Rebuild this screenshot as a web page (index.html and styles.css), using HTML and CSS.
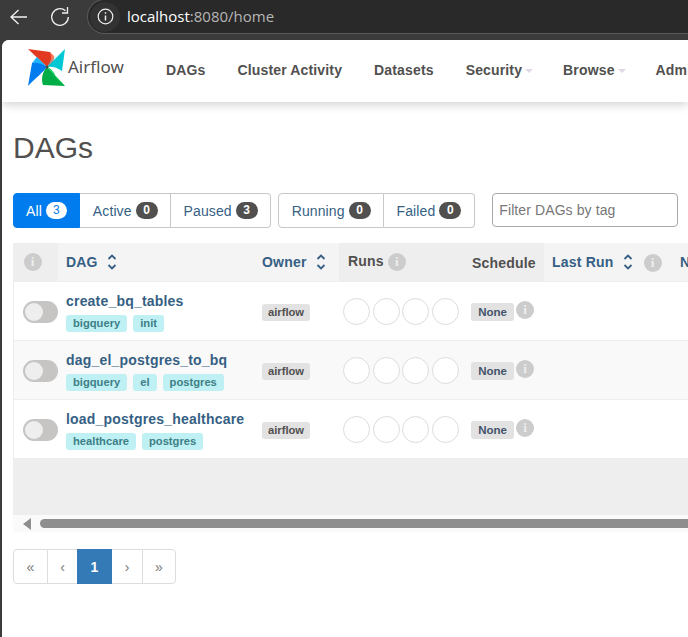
FILE: index.html
```html
<!DOCTYPE html>
<html lang="en">
<head>
<meta charset="utf-8">
<title>DAGs - Airflow</title>
<link rel="stylesheet" href="styles.css">
</head>
<body>
<header class="chrome">
  <div class="chrome-nav">
    <svg class="ic-back" width="20" height="18" viewBox="0 0 20 18"><path d="M18 9H2M9.500 2 2 9l7.500 7" fill="none" stroke="#f2f2f2" stroke-width="1.300"/></svg>
    <svg class="ic-reload" width="20" height="20" viewBox="0 0 20 20"><path d="M15.500 3.800A8.300 8.300 0 1 0 18.300 10" fill="none" stroke="#f2f2f2" stroke-width="1.300"/><path d="M12 6h5.500V0" fill="none" stroke="#f2f2f2" stroke-width="1.300"/></svg>
  </div>
  <div class="address">
    <span class="site-info"><svg width="17" height="17" viewBox="0 0 17 17"><circle cx="8.500" cy="8.500" r="7.300" fill="none" stroke="#eee" stroke-width="1.200"/><path d="M8.500 7.500v5M8.500 4.300v1.500" stroke="#eee" stroke-width="1.500"/></svg></span>
    <span class="url"><b>localhost</b>:8080/home</span>
  </div>
</header>
<main class="page">
  <nav class="navbar">
    <a class="brand">
      <svg width="38" height="38" viewBox="0 0 38 38">
        <path d="M0 0 22 3C25 8 24 14 19 18Z" fill="#e43921"/>
        <path d="M22 3 26 7C27 11 24 15 19 18 23 14 24 8 22 3Z" fill="#ff7557"/>
        <path d="M37 0 34 22C29 18 23 17 19 18Z" fill="#00c7d4"/>
        <path d="M37 0 26 9C23 12 20 15 19 18 22 13 28 7 37 0Z" fill="#11e1ee"/>
        <path d="M37 37 15 36C13 31 14 23 19 18Z" fill="#00ad46"/>
        <path d="M37 37 19 18C24 20 27 24 28 29Z" fill="#04d659"/>
        <path d="M0 37 4 14C8 12 14 13 19 18 15 23 8 29 0 37Z" fill="#017cee"/>
        <path d="M9 8 19 18C15 15 9 13 4 14Z" fill="#1bb5ff"/>
        <circle cx="19" cy="18" r="1.500" fill="#4a4a4a"/>
      </svg>
      <span class="brand-name">Airflow</span>
    </a>
    <ul class="menu">
      <li>DAGs</li>
      <li>Cluster Activity</li>
      <li>Datasets</li>
      <li class="drop">Security</li>
      <li class="drop">Browse</li>
      <li class="drop">Admin</li>
    </ul>
  </nav>
  <section class="content">
    <h1>DAGs</h1>
    <div class="filters">
      <div class="btn-group">
        <a class="filter on">All <span class="count">3</span></a>
        <a class="filter">Active <span class="count">0</span></a>
        <a class="filter">Paused <span class="count">3</span></a>
      </div>
      <div class="btn-group">
        <a class="filter">Running <span class="count">0</span></a>
        <a class="filter">Failed <span class="count">0</span></a>
      </div>
      <input class="tag-filter" type="text" placeholder="Filter DAGs by tag">
    </div>
    <div class="table-wrap">
      <table class="dags">
        <colgroup>
          <col class="c-pause"><col class="c-dag"><col class="c-owner"><col class="c-runs"><col class="c-sched"><col class="c-last"><col class="c-next">
        </colgroup>
        <thead>
          <tr>
            <th class="plain"><span class="info">i</span></th>
            <th class="sortable">DAG <svg class="sort" width="10" height="18" viewBox="0 0 10 18"><path d="M1.500 6 5 2.500 8.500 6M1.500 12 5 15.500 8.500 12" fill="none" stroke="#365f84" stroke-width="1.800"/></svg></th>
            <th class="sortable">Owner <svg class="sort" width="10" height="18" viewBox="0 0 10 18"><path d="M1.500 6 5 2.500 8.500 6M1.500 12 5 15.500 8.500 12" fill="none" stroke="#365f84" stroke-width="1.800"/></svg></th>
            <th class="plain runs-head">Runs <span class="info">i</span></th>
            <th class="plain sched-head">Schedule</th>
            <th class="sortable">Last Run <svg class="sort" width="10" height="18" viewBox="0 0 10 18"><path d="M1.500 6 5 2.500 8.500 6M1.500 12 5 15.500 8.500 12" fill="none" stroke="#365f84" stroke-width="1.800"/></svg><span class="info last-info">i</span></th>
            <th class="sortable">Next Run</th>
          </tr>
        </thead>
        <tbody>
          <tr>
            <td class="toggle-cell"><span class="toggle"></span></td>
            <td><a class="dag-name">create_bq_tables</a><div class="tags"><span class="tag">bigquery</span><span class="tag">init</span></div></td>
            <td><span class="owner">airflow</span></td>
            <td><div class="runs"><i></i><i></i><i></i><i></i></div></td>
            <td><div class="sched"><span class="none">None</span><span class="info sched-info">i</span></div></td>
            <td></td><td></td>
          </tr>
          <tr class="alt">
            <td class="toggle-cell"><span class="toggle"></span></td>
            <td><a class="dag-name">dag_el_postgres_to_bq</a><div class="tags"><span class="tag">bigquery</span><span class="tag">el</span><span class="tag">postgres</span></div></td>
            <td><span class="owner">airflow</span></td>
            <td><div class="runs"><i></i><i></i><i></i><i></i></div></td>
            <td><div class="sched"><span class="none">None</span><span class="info sched-info">i</span></div></td>
            <td></td><td></td>
          </tr>
          <tr>
            <td class="toggle-cell"><span class="toggle"></span></td>
            <td><a class="dag-name">load_postgres_healthcare</a><div class="tags"><span class="tag">healthcare</span><span class="tag">postgres</span></div></td>
            <td><span class="owner">airflow</span></td>
            <td><div class="runs"><i></i><i></i><i></i><i></i></div></td>
            <td><div class="sched"><span class="none">None</span><span class="info sched-info">i</span></div></td>
            <td></td><td></td>
          </tr>
        </tbody>
      </table>
      <div class="table-empty"></div>
      <div class="scrollbar">
        <span class="scroll-arrow"></span>
        <span class="scroll-thumb"></span>
      </div>
    </div>
    <ul class="pager">
      <li>«</li><li>‹</li><li class="current">1</li><li>›</li><li>»</li>
    </ul>
  </section>
</main>
</body>
</html>
```
FILE: styles.css
```css
* { box-sizing: border-box; }
html, body { margin: 0; height: 100%; overflow: hidden; }
body {
  width: 688px;
  height: 637px;
  background: #3b3b3b;
  font-family: "Liberation Sans", Arial, sans-serif;
  color: #51504f;
  display: flex;
  flex-direction: column;
}
.chrome {
  height: 40px;
  flex: none;
  display: flex;
  align-items: flex-start;
  background: #3b3b3b;
}
.chrome-nav {
  width: 87px;
  height: 34px;
  flex: none;
  display: flex;
  align-items: center;
  padding-left: 9px;
  gap: 21px;
}
.address {
  flex: 1;
  height: 35px;
  margin-top: -1px;
  background: #292929;
  border: 1px solid #5a5a5a;
  border-right: 0;
  border-radius: 18px 0 0 18px;
  display: flex;
  align-items: center;
  gap: 7px;
  font-family: "Open Sans", "Noto Sans", sans-serif;
  font-size: 15px;
  color: #b5b5b5;
}
.site-info {
  width: 30px;
  height: 30px;
  margin-left: 2px;
  border-radius: 50%;
  background: #333;
  display: flex;
  align-items: center;
  justify-content: center;
}
.url { padding-bottom: 2px; }
.url b { font-weight: 400; color: #fff; }
.page {
  flex: 1;
  margin-left: 2px;
  background: #fff;
  border-radius: 7px 0 0 0;
  min-height: 0;
  overflow: hidden;
  display: flex;
  flex-direction: column;
}
.navbar {
  height: 62px;
  flex: none;
  display: flex;
  align-items: flex-start;
  background: #fff;
  box-shadow: 0 2px 10px rgba(0,0,0,.2);
  padding: 9px 0 0 26px;
}
.brand { display: flex; align-items: flex-start; width: 138px; flex: none; }
.brand-name {
  font-family: "Noto Sans", "Open Sans", sans-serif;
  font-size: 17px;
  line-height: 22px;
  margin: 7px 0 0 2px;
  color: #51504f;
}
.menu {
  list-style: none;
  margin: 0;
  padding: 12px 0 0;
  display: flex;
  gap: 32px;
  font-size: 14px;
  font-weight: 700;
  line-height: 18px;
  white-space: nowrap;
  letter-spacing: .15px;
}
.drop { margin-right: -2px; }
.drop::after {
  content: "";
  display: inline-block;
  margin-left: 3px;
  vertical-align: 2px;
  border: 4px solid transparent;
  border-top-color: #e0d8e2;
  border-bottom: 0;
}
.content { padding: 0 0 0 11px; flex: 1; min-width: 0; }
h1 {
  margin: 29px 0 28px;
  font-size: 30px;
  line-height: 34px;
  font-weight: 400;
  color: #51504f;
}
.filters { display: flex; align-items: flex-start; height: 35px; }
.btn-group { display: flex; margin-right: 7px; }
.btn-group + .btn-group { margin-right: 17px; }
.btn-group + .btn-group .filter:last-child { padding-right: 13px; }
.filter {
  display: flex;
  align-items: center;
  gap: 4px;
  height: 35px;
  padding: 0 12px 0 13px;
  border: 1px solid #c8c8c8;
  border-left-width: 0;
  font-size: 14px;
  letter-spacing: .1px;
  color: #365f84;
  background: #fff;
  white-space: nowrap;
}
.filter:first-child { border-left-width: 1px; border-radius: 4px 0 0 4px; }
.filter:last-child { border-radius: 0 4px 4px 0; }
.filter.on { padding-left: 12px; background: #017cee; border-color: #017cee; color: #fff; }
.count {
  min-width: 22px;
  height: 17px;
  padding: 0 7px;
  border-radius: 9px;
  background: #51504f;
  color: #fff;
  font-size: 12px;
  font-weight: 700;
  line-height: 17px;
  text-align: center;
  letter-spacing: 0;
}
.on .count { min-width: 21px; padding: 0 6px; background: #fff; color: #017cee; font-weight: 400; }
.tag-filter {
  width: 186px;
  height: 34px;
  padding: 0 6px;
  border: 1px solid #a8a8a8;
  border-radius: 4px;
  font: 14px "Liberation Sans", Arial, sans-serif;
  letter-spacing: .1px;
}
.tag-filter::placeholder { color: #777; opacity: 1; }
.table-wrap { margin-top: 15px; width: 800px; }
.dags {
  border-collapse: separate;
  border-spacing: 0;
  table-layout: fixed;
  width: 800px;
}
.c-pause { width: 45px; }
.c-dag { width: 196px; }
.c-owner { width: 85px; }
.c-runs { width: 125px; }
.c-sched { width: 80px; }
.c-last { width: 128px; }
.c-next { width: 141px; }
th {
  height: 39px;
  padding: 0 8px;
  text-align: left;
  font-size: 14px;
  font-weight: 700;
  white-space: nowrap;
  background: #f4f4f4;
  color: #365f84;
  border-bottom: 1px solid #eee;
  vertical-align: middle;
  letter-spacing: .2px;
}
th.plain { background: #eee; color: #51504f; }
th.plain:first-child { text-align: center; padding-left: 0; padding-right: 6px; }
.runs-head { padding-left: 9px; }
.sched-head { vertical-align: bottom; padding-bottom: 10px; }
.sort { vertical-align: -4px; margin-left: 5px; }
.info {
  display: inline-block;
  width: 18px;
  height: 18px;
  border-radius: 50%;
  background: #ccc;
  color: #eee;
  font-family: "Liberation Serif", serif;
  font-size: 13px;
  font-weight: 700;
  line-height: 18px;
  text-align: center;
  letter-spacing: 0;
}
.last-info { margin-left: 11px; }
td {
  height: 59px;
  padding: 0 8px;
  vertical-align: top;
  border-bottom: 1px solid #eee;
  background: #fff;
}
td:first-child { border-left: 1px solid #eee; }
.alt td { background: #f9f9f9; }
.toggle-cell { padding: 19px 0 0 9px; }
.toggle {
  display: block;
  width: 35px;
  height: 22px;
  border-radius: 11px;
  background: #c6c5c3;
  position: relative;
}
.toggle::before {
  content: "";
  position: absolute;
  left: 2px;
  top: 2px;
  width: 18px;
  height: 18px;
  border-radius: 50%;
  background: #eee;
}
.dag-name {
  display: block;
  margin-top: 10px;
  font-size: 14px;
  font-weight: 700;
  line-height: 18px;
  color: #365f84;
  letter-spacing: .2px;
  white-space: nowrap;
}
.tags { display: flex; gap: 6px; margin-top: 5px; }
.tag {
  height: 17px;
  padding: 0 7px;
  border-radius: 3px;
  background: #bff0f3;
  color: #3d7f87;
  font-size: 11.200px;
  font-weight: 700;
  line-height: 17px;
}
.owner {
  display: inline-block;
  margin-top: 22px;
  height: 17px;
  padding: 0 6px;
  border-radius: 3px;
  background: #e2e2e2;
  color: #51504f;
  font-size: 11.200px;
  font-weight: 700;
  line-height: 17px;
}
.runs { display: flex; gap: 2.500px; margin: 16px 0 0 -4px; width: 120px; }
.runs i {
  flex: none;
  width: 27px;
  height: 27px;
  border: 1px solid #dcdcdc;
  border-radius: 50%;
  background: #fff;
}
.sched { display: flex; align-items: flex-start; margin: 21px 0 0 -1px; }
.none {
  height: 18px;
  width: 43px;
  flex: none;
  text-align: center;
  border-radius: 3px;
  background: #e2e2e2;
  color: #44546a;
  font-size: 11.500px;
  font-weight: 700;
  line-height: 18px;
}
.sched-info { margin: -2px 0 0 2px; flex: none; }
.table-empty { height: 56px; background: #eee; }
.scrollbar {
  height: 17px;
  background: #fafafa;
  display: flex;
  align-items: center;
  padding-left: 10px;
  gap: 9px;
}
.scroll-arrow {
  border: 6px solid transparent;
  border-right: 8px solid #8e8e8e;
  border-left: 0;
}
.scroll-thumb { width: 740px; height: 9px; border-radius: 5px; background: #8e8e8e; }
.pager {
  list-style: none;
  display: flex;
  width: max-content;
  margin: 17px 0 0;
  padding: 0;
  border: 1px solid #ddd;
  border-radius: 4px;
  height: 35px;
  font-size: 14px;
  color: #777;
}
.pager li {
  width: 30px;
  display: flex;
  align-items: center;
  justify-content: center;
  border-left: 1px solid #ddd;
}
.pager li:first-child { width: 33px; border-left: 0; }
.pager li:last-child { width: 33px; }
.pager li.current {
  width: 35px;
  margin: -1px 0;
  background: #337ab7;
  color: #fff;
  border-left: 0;
  font-weight: 700;
}
.pager li.current + li { border-left: 0; }
```
